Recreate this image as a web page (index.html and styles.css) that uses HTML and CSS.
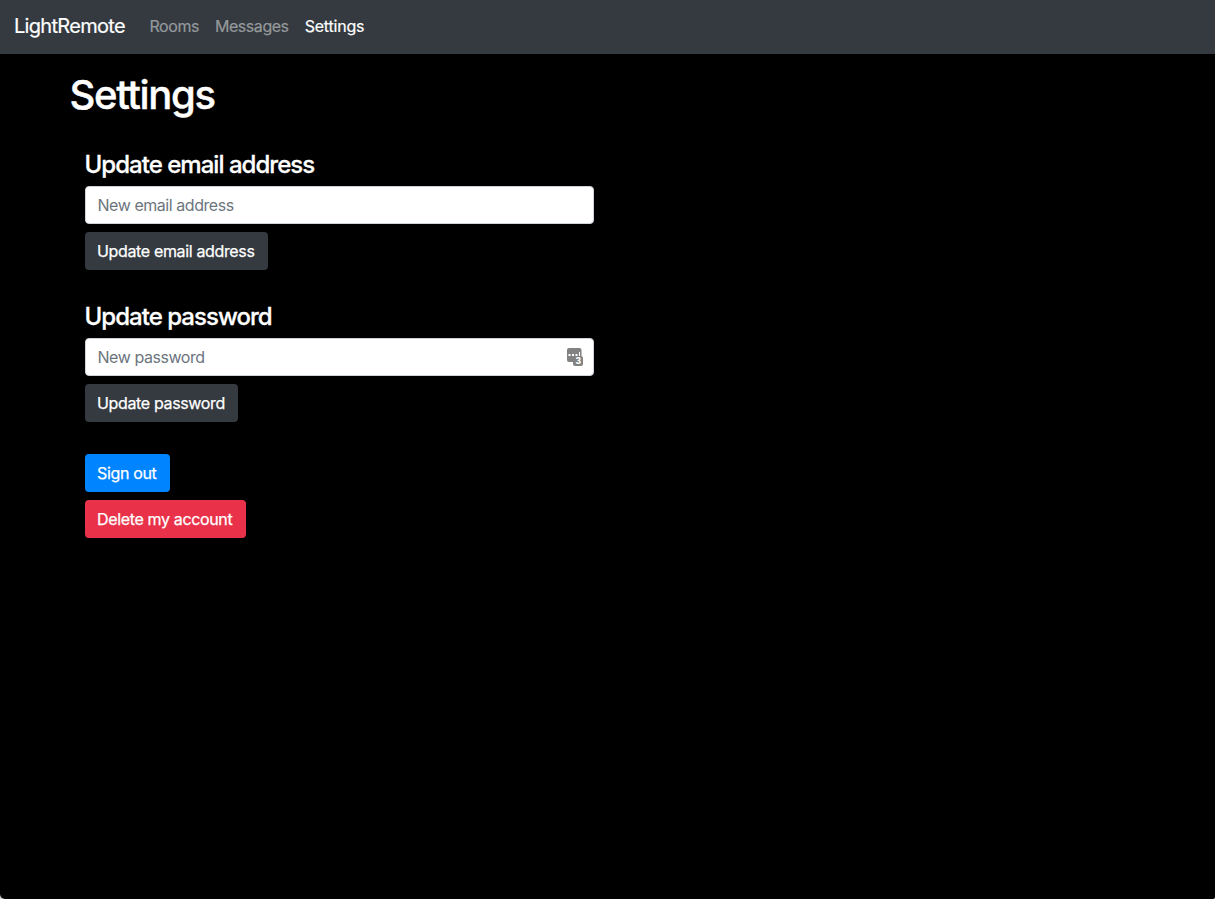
FILE: index.html
```html
<!DOCTYPE html>
<html lang="en">
<head>
<meta charset="utf-8">
<title>LightRemote</title>
<link rel="stylesheet" href="styles.css">
</head>
<body>
<div class="page">
<nav class="navbar">
  <a class="brand">LightRemote</a>
  <a class="nav-link">Rooms</a>
  <a class="nav-link">Messages</a>
  <a class="nav-link active">Settings</a>
</nav>
<main class="container">
  <h1 class="title">Settings</h1>
  <form class="group">
    <h2 class="subtitle">Update email address</h2>
    <input class="field" type="email" placeholder="New email address">
    <button class="btn dark email" type="button">Update email address</button>
  </form>
  <form class="group">
    <h2 class="subtitle">Update password</h2>
    <div class="field-wrap">
      <input class="field" type="password" placeholder="New password">
      <svg class="manager" width="16" height="18" viewBox="0 0 16 18">
        <path fill="#828282" d="M2 0h10.5a2 2 0 0 1 2 2v6H14a2 2 0 0 1 2 2v6a2 2 0 0 1-2 2H8a2 2 0 0 1-2-2v-2H2a2 2 0 0 1-2-2V2a2 2 0 0 1 2-2z"/>
        <path fill="#fff" d="M1.5 6h2v2h-2zM5 6h2v2H5zM8.5 6h2v2h-2zM12 4h1v4h-1z"/>
        <text class="count" x="11.2" y="16.3" text-anchor="middle">3</text>
      </svg>
    </div>
    <button class="btn dark password" type="button">Update password</button>
  </form>
  <div class="group">
    <button class="btn blue" type="button">Sign out</button>
    <button class="btn red" type="button">Delete my account</button>
  </div>
</main>
</div>
</body>
</html>
```
FILE: styles.css
```css
* { box-sizing: border-box; }
body {
  margin: 0;
  background: #ccc;
  color: #fff;
  font-family: Inter, "Liberation Sans", sans-serif;
  font-size: 16px;
  line-height: 24px;
}
.page {
  min-height: 899px;
  background: #000;
  border-radius: 0 0 2px 5px;
}
.navbar {
  display: flex;
  align-items: center;
  height: 54px;
  padding: 0 14px 2px;
  background: #343a40;
}
.brand {
  width: 127.5px;
  font-size: 20px;
  line-height: 30px;
  letter-spacing: -0.7px;
  -webkit-text-stroke: 0.2px;
}
.nav-link {
  padding: 0 8px;
  color: #96999c;
  letter-spacing: -0.45px;
  -webkit-text-stroke: 0.2px;
}
.active { color: #fff; letter-spacing: -0.2px; }
.container {
  width: 1140px;
  margin: 0 auto;
  padding: 17px 32px 0;
}
.title {
  margin: 0 0 31px;
  font-size: 40px;
  line-height: 48px;
  font-weight: 550;
  letter-spacing: -1.35px;
  -webkit-text-stroke: 0.4px;
}
.group {
  display: flex;
  flex-direction: column;
  align-items: flex-start;
  gap: 8px;
  width: 509px;
  margin: 0 0 32px 15px;
}
.subtitle {
  margin: 0;
  padding-top: 2px;
  font-size: 24px;
  line-height: 26px;
  font-weight: 550;
  letter-spacing: -0.97px;
  -webkit-text-stroke: 0.3px;
}
.field-wrap { position: relative; width: 100%; }
.field {
  display: block;
  width: 100%;
  height: 38px;
  padding: 6px 12px;
  border: 1px solid #ced4da;
  border-radius: 4px;
  background: #fff;
  font: inherit;
  letter-spacing: -0.45px;
}
.field::placeholder { color: #6c757d; opacity: 1; }
.manager { position: absolute; right: 11px; top: 10px; }
.count { fill: #fff; font-size: 8.5px; font-weight: 800; }
.btn {
  height: 38px;
  padding: 0 0 0 12.5px;
  border: 0;
  border-radius: 4px;
  color: #fff;
  font: inherit;
  text-align: left;
  letter-spacing: -0.35px;
  white-space: nowrap;
  -webkit-text-stroke: 0.25px;
}
.dark { background: #343a40; }
.email { width: 183px; }
.password { width: 153px; }
.blue { width: 85px; background: #0084ff; }
.red { width: 161px; background: #e93249; }
```
